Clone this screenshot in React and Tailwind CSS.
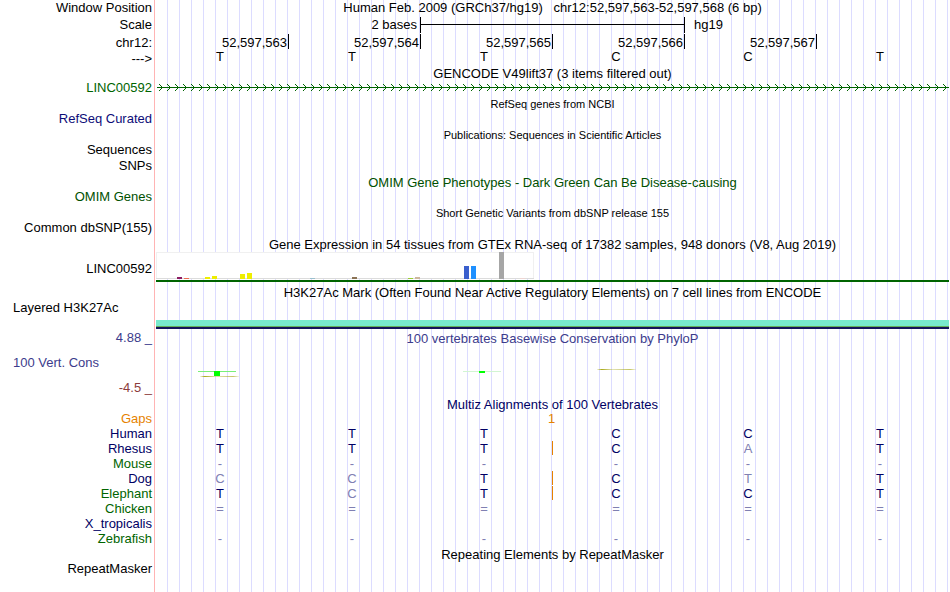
import React from "react";

const assembly = "Human Feb. 2009 (GRCh37/hg19)\u00a0\u00a0 chr12:52,597,563-52,597,568 (6 bp)";
const positions = ["52,597,563", "52,597,564", "52,597,565", "52,597,566", "52,597,567"];
const bases = ["T", "T", "T", "C", "C", "T"];

// lower case marks a base that differs from the human one
const species = [
  { name: "Human", color: "text-[#000064]", row: "TTTCCT", gap: false },
  { name: "Rhesus", color: "text-[#000064]", row: "TTTCaT", gap: true },
  { name: "Mouse", color: "text-[#006400]", row: "------", gap: false },
  { name: "Dog", color: "text-[#000064]", row: "ccTCtT", gap: true },
  { name: "Elephant", color: "text-[#006400]", row: "TcTCCT", gap: true },
  { name: "Chicken", color: "text-[#006400]", row: "======", gap: false },
  { name: "X_tropicalis", color: "text-[#000064]", row: "", gap: false },
  { name: "Zebrafish", color: "text-[#006400]", row: "------", gap: false },
];

const tissues = [
  { x: 21, h: 2, fill: "#8b1c62" },
  { x: 28, h: 1, fill: "#ee6a50" },
  { x: 49, h: 2, fill: "#eeee00" },
  { x: 56, h: 3, fill: "#eeee00" },
  { x: 84, h: 5, fill: "#eeee00" },
  { x: 91, h: 6, fill: "#eeee00" },
  { x: 154, h: 1, fill: "#9ac0cd" },
  { x: 196, h: 2, fill: "#8b7355" },
  { x: 252, h: 1, fill: "#9acd32" },
  { x: 259, h: 2, fill: "#cdb79e" },
  { x: 308, h: 13, fill: "#3a5fcd" },
  { x: 315, h: 13, fill: "#1e90ff" },
  { x: 343, h: 27, fill: "#a6a6a6" },
  { x: 364, h: 1, fill: "#eed5d2" },
];

function Row({ label, labelClass = "text-right", pad = "pb-[2px]", height = "h-[15px]", children }) {
  return (
    <div className={`flex items-center ${height}`}>
      <div className={`w-[156px] shrink-0 whitespace-nowrap pr-1 ${pad} ${labelClass}`}>{label}</div>
      <div className="h-full min-w-0 flex-1">{children}</div>
    </div>
  );
}

function Title({ children, height = "h-4", color = "text-black", align = "items-center" }) {
  return (
    <Row height={height}>
      <h2 className={`flex h-full justify-center whitespace-nowrap ${align} ${color}`}>{children}</h2>
    </Row>
  );
}

function SmallTitle({ children }) {
  return (
    <Row>
      <h2 className="flex h-full items-center justify-center whitespace-nowrap pt-[2px] text-[11px]">{children}</h2>
    </Row>
  );
}

function BaseRow({ row, gap }) {
  return (
    <div className="ml-px grid h-[14px] grid-cols-6 grid-rows-1 text-center">
      {row.map((b, i) => {
        const mismatch = b === "-" || b === "=" || b !== b.toUpperCase();
        return (
          <div key={i} className={`flex ${gap && i === 3 ? "-ml-px border-l border-[#e68200]" : ""}`}>
            <span className={`flex-1 pr-[6px] ${mismatch ? "text-[#8080b2]" : ""}`}>{b.toUpperCase()}</span>
          </div>
        );
      })}
    </div>
  );
}

function GeneArrows() {
  return (
    <svg className="block h-full w-full" aria-label="LINC00592 on the forward strand">
      <defs>
        <pattern id="strand" width="8" height="14" patternUnits="userSpaceOnUse">
          <path d="M3 3.5h1M4 4.5h1M5 5.5h1M5 7.5h1M4 8.5h1M3 9.5h1" stroke="#006400" shapeRendering="crispEdges" />
        </pattern>
      </defs>
      <rect width="100%" height="14" fill="url(#strand)" />
      <rect x="1" y="6" width="100%" height="1" fill="#006400" />
    </svg>
  );
}

function ExpressionBars() {
  return (
    <div className="flex h-full flex-col justify-between border-b-2 border-[#006400]">
      <svg className="block h-[27px] w-[378px]" shapeRendering="crispEdges">
        <rect width="378" height="27" fill="#fff" />
        <path d="M0 .5h378M.5 0v27M377.5 0v27" stroke="#f0f0f0" />
        <path d="M0 26.5h378" stroke="#dcdcdc" />
        {tissues.map((t) => (
          <rect key={t.x} x={t.x} y={27 - t.h} width="5" height={t.h} fill={t.fill} />
        ))}
      </svg>
    </div>
  );
}

function Conservation() {
  return (
    <svg className="block h-full w-full" viewBox="0 0 793 50" preserveAspectRatio="none" shapeRendering="crispEdges">
      <defs>
        <linearGradient id="olive">
          <stop offset="0" stopColor="#a0a000" stopOpacity="0.1" />
          <stop offset="0.12" stopColor="#a0a000" stopOpacity="0.9" />
          <stop offset="0.4" stopColor="#a0a000" stopOpacity="0.3" />
          <stop offset="0.85" stopColor="#a0a000" stopOpacity="0.6" />
          <stop offset="1" stopColor="#a0a000" stopOpacity="0.1" />
        </linearGradient>
      </defs>
      <rect x="42" y="24" width="38" height="1" fill="#78f078" />
      <rect x="58" y="24" width="6" height="5" fill="#00ff00" />
      <rect x="44" y="29" width="39" height="1" fill="url(#olive)" />
      <rect x="307" y="24" width="38" height="1" fill="#d2f5d2" />
      <rect x="323" y="24" width="6" height="2" fill="#00ff00" />
      <rect x="441" y="22" width="39" height="1" fill="url(#olive)" />
    </svg>
  );
}

export default function App() {
  return (
    <main className="relative min-h-screen bg-white pr-px font-['Liberation_Sans',Arial,sans-serif] text-[13px] leading-[15px] text-black">
      {/* guide lines behind the tracks */}
      <div className="absolute inset-y-0 left-[154px] right-px flex border-l border-[#ffb4b4] pl-px">
        <div className="flex-1 bg-[linear-gradient(to_right,transparent_11px,#dcdcff_11px)] bg-[length:12px_12px]" />
      </div>

      <div className="relative pb-[15px]">
        <Row label="Window Position" height="h-4">
          <h1 className="text-center whitespace-pre">{assembly}</h1>
        </Row>
        <Row label="Scale" pad="pb-0" height="h-[17px]">
          <div className="ml-px grid h-full grid-cols-6 items-center">
            <div className="col-span-2 pr-1 text-right">2 bases</div>
            <div className="col-span-2 -ml-px flex h-4 items-center border-x border-black">
              <div className="h-px flex-1 bg-black" />
            </div>
            <div className="pl-[9px]">hg19</div>
          </div>
        </Row>
        <Row label="chr12:" pad="pt-[2px]" height="h-[17px]">
          <div className="ml-px grid h-full grid-cols-6 items-center">
            {positions.map((p) => (
              <div key={p} className="flex h-[15px] items-start justify-end border-r border-black pr-px pt-px">{p}</div>
            ))}
          </div>
        </Row>
        <Row label="--->" pad="pt-[2px]">
          <div className="leading-[13px]"><BaseRow row={bases} /></div>
        </Row>

        <Title>GENCODE V49lift37 (3 items filtered out)</Title>
        <Row label="LINC00592" labelClass="text-right text-[#006400]"><GeneArrows /></Row>
        <SmallTitle>RefSeq genes from NCBI</SmallTitle>
        <Row label="RefSeq Curated" labelClass="text-right text-[#0c0c78]" height="h-4" />
        <SmallTitle>Publications: Sequences in Scientific Articles</SmallTitle>
        <Row label="Sequences" height="h-4" />
        <Row label="SNPs" height="h-4" />
        <Title color="text-[#005000]">OMIM Gene Phenotypes - Dark Green Can Be Disease-causing</Title>
        <Row label="OMIM Genes" labelClass="text-right text-[#005000]" />
        <SmallTitle>Short Genetic Variants from dbSNP release 155</SmallTitle>
        <Row label="Common dbSNP(155)" height="h-4" />
        <Title>Gene Expression in 54 tissues from GTEx RNA-seq of 17382 samples, 948 donors (V8, Aug 2019)</Title>
        <Row label="LINC00592" pad="pt-[2px]" height="h-[30px]"><ExpressionBars /></Row>

        <Title height="h-[18px]" align="items-end">
          H3K27Ac Mark (Often Found Near Active Regulatory Elements) on 7 cell lines from ENCODE
        </Title>
        <Row label="Layered H3K27Ac" labelClass="pl-[13px] self-start" height="h-[29px]">
          <div className="flex h-full flex-col justify-end">
            <div className="h-[6px] bg-[#78ebcd]" />
            <div className="h-px bg-[#64af5a]" />
            <div className="h-[2px] bg-[#14145a]" />
          </div>
        </Row>

        <Row label="4.88 _" labelClass="text-right text-[#3c3c8c]" height="h-[18px]">
          <h2 className="flex h-full items-center justify-center text-[#3c3c8c]">100 vertebrates Basewise Conservation by PhyloP</h2>
        </Row>
        <div className="flex h-[50px]">
          <div className="flex w-[156px] shrink-0 flex-col justify-between pb-[2px] pl-[13px] pr-1 pt-2">
            <span className="text-[#3c3c8c]">100 Vert. Cons</span>
            <span className="text-right text-[#8c3c3c]">-4.5 _</span>
          </div>
          <div className="flex-1"><Conservation /></div>
        </div>

        <Title height="h-[14px]" color="text-[#000064]">Multiz Alignments of 100 Vertebrates</Title>
        <Row label="Gaps" pad="pb-0" labelClass="text-right text-[#e68200]">
          <div className="pr-[2px] text-center text-[#e68200]">1</div>
        </Row>
        {species.map((s) => (
          <Row key={s.name} label={s.name} pad="pb-0" labelClass={`text-right ${s.color}`}>
            <div className="h-full text-[#000064]">
              <BaseRow row={s.row.split("")} gap={s.gap} />
            </div>
          </Row>
        ))}
        <Title height="h-4">Repeating Elements by RepeatMasker</Title>
        <Row label="RepeatMasker" />
      </div>
    </main>
  );
}
